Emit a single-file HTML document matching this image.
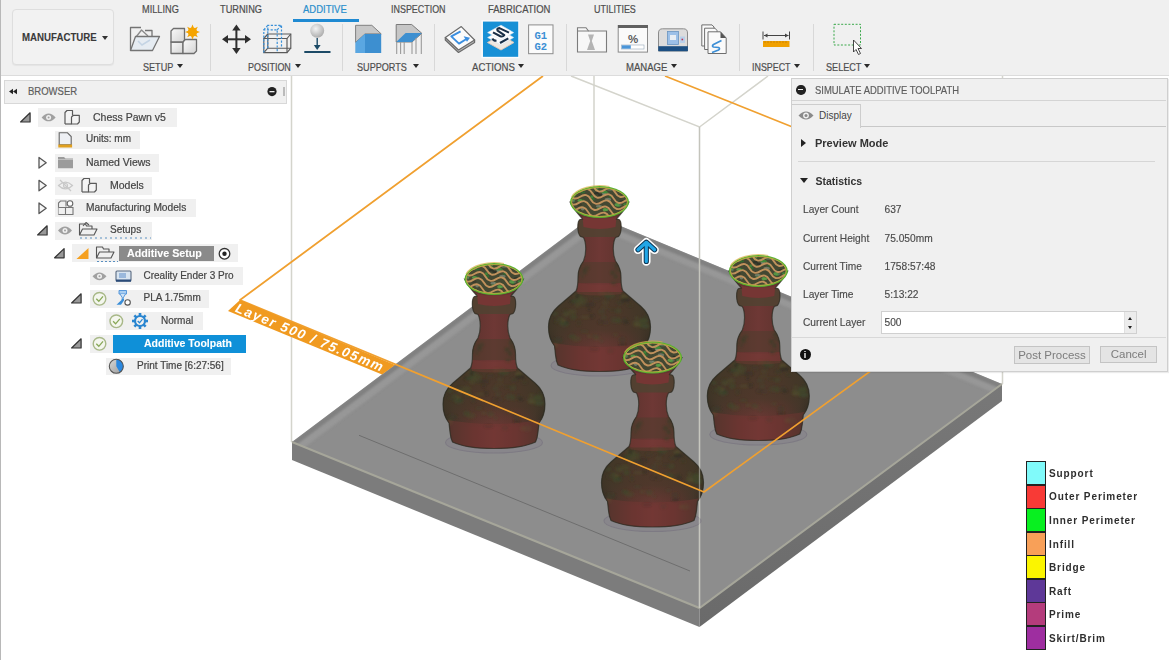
<!DOCTYPE html>
<html><head><meta charset="utf-8">
<style>
*{box-sizing:border-box;margin:0;padding:0}
html,body{width:1169px;height:660px;overflow:hidden;background:#fff;font-family:"Liberation Sans",sans-serif;position:relative}
.a{position:absolute;white-space:nowrap}
#tb{position:absolute;left:0;top:0;width:1169px;height:76px;background:#f0f0f0;border-bottom:1px solid #dcdcdc}
.tab{position:absolute;top:3.5px;font-size:10.4px;color:#4e4e4e;line-height:12px;-webkit-text-stroke:0.2px #4e4e4e;transform-origin:0 0}
.grp{position:absolute;top:61.5px;font-size:10.4px;color:#4e4e4e;line-height:12px;-webkit-text-stroke:0.2px #4e4e4e;transform-origin:0 0}
.grp i{display:inline-block;width:0;height:0;border-left:3px solid transparent;border-right:3px solid transparent;border-top:4px solid #333;margin-left:3.5px;vertical-align:2px}
.sep{position:absolute;top:24px;width:1px;height:47px;background:#d8d8d8}
.row{position:absolute;height:18px;background:#f0f0f0}
.rt{position:absolute;font-size:10.5px;color:#444;line-height:12px;-webkit-text-stroke:0.2px #444}
.lbl{position:absolute;font-size:10.2px;color:#4a4a4a;line-height:12px;-webkit-text-stroke:0.15px #4a4a4a}
.leg{position:absolute;left:1049px;font-size:10px;font-weight:bold;letter-spacing:0.9px;color:#2e2e2e;line-height:12px}
</style></head><body>
<div style="position:absolute;left:0;top:0;width:1px;height:660px;background:#b8b8b8;z-index:50"></div>

<!-- SCENE -->
<svg class="a" style="left:0;top:0" width="1169" height="660" viewBox="0 0 1169 660">
 <defs>
  <linearGradient id="pshade" x1="0" y1="0" x2="1" y2="0">
   <stop offset="0" stop-color="#2c2a20"/><stop offset="0.1" stop-color="#44342a"/><stop offset="0.3" stop-color="#60342f"/><stop offset="0.5" stop-color="#6e3835"/><stop offset="0.72" stop-color="#60342f"/><stop offset="0.9" stop-color="#44342a"/><stop offset="1" stop-color="#2a2820"/>
  </linearGradient>
  <linearGradient id="bulb" x1="0" y1="0" x2="1" y2="0">
   <stop offset="0" stop-color="#3a3424"/><stop offset="0.2" stop-color="#4e4030"/><stop offset="0.5" stop-color="#5a3e32"/><stop offset="0.8" stop-color="#4a3a2c"/><stop offset="1" stop-color="#2e2a20"/>
  </linearGradient>
  <linearGradient id="plateL" x1="0" y1="0" x2="0" y2="1"><stop offset="0" stop-color="#8a8a8a"/><stop offset="1" stop-color="#767676"/></linearGradient>
  <clipPath id="ellclip"><ellipse cx="0" cy="0" rx="27.6" ry="14.2"/></clipPath>
  <filter id="blur05" x="-10%" y="-10%" width="120%" height="120%"><feGaussianBlur stdDeviation="0.5"/></filter>
  <filter id="blur1" x="-10%" y="-10%" width="120%" height="120%"><feGaussianBlur stdDeviation="1.1"/></filter>
  <clipPath id="silclip"><path d="M 29.5 0 C 26 8 19 14 17 17 L 19.5 17.5 C 22.5 19 22.5 31 19 34.5 L 16 35.5 C 13 41 13 52 16 59 C 19 63 21.5 68 21.5 75 C 21.5 82 22 86 23.5 89 C 28 93 34 98 41 104 C 47 109 51 116 51 125 C 51 133 49 139 45 144 L 44 153 C 43.5 158 42.5 161 41.5 163 C30 168.5 15 169.5 0 169.5 C-15 169.5 -30 168.5 -41.5 163 C -42.5 161 -43.5 158 -44 153 L -45 144 C -49 139 -51 133 -51 125 C -51 116 -47 109 -41 104 C -34 98 -28 93 -23.5 89 C -22 86 -21.5 82 -21.5 75 C -21.5 68 -19 63 -16 59 C -13 52 -13 41 -16 35.5 L -19 34.5 C -22.5 31 -22.5 19 -19.5 17.5 L -17 17 C -19 14 -26 8 -29.5 0 Z"/></clipPath>
  <linearGradient id="olive" x1="0" y1="0" x2="0" y2="1"><stop offset="0" stop-color="#403826" stop-opacity="0.9"/><stop offset="0.65" stop-color="#443828" stop-opacity="0.8"/><stop offset="1" stop-color="#4a3a2c" stop-opacity="0.1"/></linearGradient>
  <radialGradient id="bulbhi" cx="0.5" cy="0.5" r="0.5"><stop offset="0" stop-color="#7a3a36" stop-opacity="0.55"/><stop offset="1" stop-color="#7a3a36" stop-opacity="0"/></radialGradient>
  <g id="pawn">
   <ellipse cx="0" cy="163.5" rx="48.5" ry="10.5" fill="#86828a" stroke="#726c7c" stroke-width="1.1" opacity="0.55"/>
   <path d="M 29.5 0 C 26 8 19 14 17 17 L 19.5 17.5 C 22.5 19 22.5 31 19 34.5 L 16 35.5 C 13 41 13 52 16 59 C 19 63 21.5 68 21.5 75 C 21.5 82 22 86 23.5 89 C 28 93 34 98 41 104 C 47 109 51 116 51 125 C 51 133 49 139 45 144 L 44 153 C 43.5 158 42.5 161 41.5 163 C30 168.5 15 169.5 0 169.5 C-15 169.5 -30 168.5 -41.5 163 C -42.5 161 -43.5 158 -44 153 L -45 144 C -49 139 -51 133 -51 125 C -51 116 -47 109 -41 104 C -34 98 -28 93 -23.5 89 C -22 86 -21.5 82 -21.5 75 C -21.5 68 -19 63 -16 59 C -13 52 -13 41 -16 35.5 L -19 34.5 C -22.5 31 -22.5 19 -19.5 17.5 L -17 17 C -19 14 -26 8 -29.5 0 Z" fill="url(#pshade)"/>
   <g clip-path="url(#silclip)">
    <rect x="-52" y="90" width="104" height="58" fill="url(#olive)" opacity="0.9"/>
    <g filter="url(#blur1)"><ellipse cx="-34.3" cy="109.4" rx="2.2" ry="2.2" fill="#3c3a28" opacity="0.60"/><ellipse cx="-44.2" cy="111.9" rx="2.6" ry="1.4" fill="#3e4a2c" opacity="0.69"/><ellipse cx="-25.9" cy="115.1" rx="3.3" ry="2.7" fill="#3e4a2c" opacity="0.51"/><ellipse cx="-17.2" cy="97.4" rx="4.8" ry="2.2" fill="#3e4a2c" opacity="0.53"/><ellipse cx="47.6" cy="113.8" rx="3.7" ry="1.4" fill="#3c3a28" opacity="0.73"/><ellipse cx="4.1" cy="115.1" rx="2.9" ry="2.7" fill="#3e4a2c" opacity="0.29"/><ellipse cx="5.9" cy="100.8" rx="3.1" ry="2.2" fill="#4a4a2c" opacity="0.33"/><ellipse cx="-22.6" cy="93.8" rx="3.5" ry="2.2" fill="#4a4a2c" opacity="0.69"/><ellipse cx="-3.4" cy="136.6" rx="3.1" ry="1.6" fill="#56502e" opacity="0.28"/><ellipse cx="20.2" cy="100.8" rx="3.7" ry="2.1" fill="#3c3a28" opacity="0.53"/><ellipse cx="22.9" cy="142.5" rx="3.8" ry="1.3" fill="#2e2c22" opacity="0.48"/><ellipse cx="-33.5" cy="120.7" rx="2.5" ry="2.1" fill="#2e2c22" opacity="0.59"/><ellipse cx="7.9" cy="92.4" rx="3.7" ry="2.8" fill="#3e4a2c" opacity="0.42"/><ellipse cx="18.8" cy="108.8" rx="3.5" ry="2.6" fill="#3e4a2c" opacity="0.45"/><ellipse cx="-21.3" cy="94.1" rx="3.4" ry="2.4" fill="#2e2c22" opacity="0.66"/><ellipse cx="10.3" cy="93.6" rx="5.0" ry="2.7" fill="#3e4a2c" opacity="0.45"/><ellipse cx="-10.4" cy="107.1" rx="2.1" ry="2.0" fill="#2e2c22" opacity="0.36"/><ellipse cx="-26.9" cy="100.1" rx="2.7" ry="1.7" fill="#3c3a28" opacity="0.63"/><ellipse cx="-10.2" cy="134.3" rx="2.2" ry="2.0" fill="#56502e" opacity="0.35"/><ellipse cx="38.3" cy="123.0" rx="4.6" ry="1.7" fill="#56502e" opacity="0.63"/><ellipse cx="-14.1" cy="114.9" rx="4.9" ry="1.5" fill="#56502e" opacity="0.39"/><ellipse cx="-19.2" cy="100.6" rx="2.0" ry="2.7" fill="#4a4a2c" opacity="0.52"/><ellipse cx="-15.9" cy="100.9" rx="3.3" ry="1.9" fill="#4a4a2c" opacity="0.47"/><ellipse cx="45.3" cy="124.0" rx="4.9" ry="2.4" fill="#3e4a2c" opacity="0.70"/><ellipse cx="-4.3" cy="134.4" rx="3.2" ry="1.9" fill="#3e4a2c" opacity="0.29"/><ellipse cx="7.9" cy="96.2" rx="2.6" ry="3.0" fill="#3c3a28" opacity="0.38"/><ellipse cx="-39.0" cy="116.4" rx="2.2" ry="1.2" fill="#3e4a2c" opacity="0.64"/><ellipse cx="-26.8" cy="99.1" rx="3.8" ry="1.3" fill="#2e2c22" opacity="0.65"/><ellipse cx="-9.6" cy="102.5" rx="4.9" ry="2.3" fill="#2e2c22" opacity="0.37"/><ellipse cx="-38.5" cy="118.4" rx="5.0" ry="2.0" fill="#56502e" opacity="0.63"/><ellipse cx="-41.4" cy="119.0" rx="4.2" ry="2.5" fill="#3c3a28" opacity="0.66"/><ellipse cx="19.2" cy="118.7" rx="2.1" ry="2.9" fill="#3e4a2c" opacity="0.44"/><ellipse cx="-35.3" cy="121.7" rx="4.7" ry="2.6" fill="#3e4a2c" opacity="0.60"/><ellipse cx="13.4" cy="107.9" rx="4.1" ry="1.7" fill="#3c3a28" opacity="0.39"/><ellipse cx="-33.3" cy="112.0" rx="3.6" ry="2.6" fill="#4a4a2c" opacity="0.58"/><ellipse cx="-27.5" cy="109.8" rx="4.4" ry="2.7" fill="#4a4a2c" opacity="0.53"/><ellipse cx="-27.3" cy="134.4" rx="3.5" ry="2.5" fill="#3e4a2c" opacity="0.52"/><ellipse cx="29.0" cy="149.4" rx="2.8" ry="2.4" fill="#56502e" opacity="0.54"/><ellipse cx="-5.3" cy="147.4" rx="4.9" ry="1.9" fill="#2e2c22" opacity="0.30"/><ellipse cx="-21.8" cy="103.2" rx="3.0" ry="2.1" fill="#4a4a2c" opacity="0.52"/><ellipse cx="11.0" cy="149.1" rx="3.4" ry="2.4" fill="#3c3a28" opacity="0.36"/><ellipse cx="-41.5" cy="138.0" rx="4.7" ry="2.6" fill="#3c3a28" opacity="0.67"/><ellipse cx="-2.2" cy="135.0" rx="3.3" ry="2.3" fill="#4a4a2c" opacity="0.27"/><ellipse cx="24.8" cy="95.2" rx="3.4" ry="2.5" fill="#56502e" opacity="0.70"/><ellipse cx="-18.9" cy="95.1" rx="2.1" ry="2.3" fill="#4a4a2c" opacity="0.59"/><ellipse cx="15.6" cy="117.9" rx="4.5" ry="3.0" fill="#3e4a2c" opacity="0.41"/><ellipse cx="-15.0" cy="129.4" rx="3.6" ry="1.2" fill="#3e4a2c" opacity="0.40"/><ellipse cx="22.6" cy="138.0" rx="3.6" ry="2.9" fill="#3c3a28" opacity="0.48"/><ellipse cx="37.2" cy="116.0" rx="2.1" ry="1.6" fill="#4a4a2c" opacity="0.62"/><ellipse cx="26.4" cy="120.1" rx="2.8" ry="2.0" fill="#2e2c22" opacity="0.51"/><ellipse cx="26.1" cy="97.9" rx="4.7" ry="2.4" fill="#2e2c22" opacity="0.66"/><ellipse cx="1.7" cy="138.9" rx="2.4" ry="1.5" fill="#3e4a2c" opacity="0.27"/><ellipse cx="37.3" cy="120.6" rx="3.8" ry="2.6" fill="#4a4a2c" opacity="0.62"/><ellipse cx="-24.0" cy="99.0" rx="4.2" ry="2.2" fill="#3e4a2c" opacity="0.61"/><ellipse cx="1.8" cy="109.6" rx="3.4" ry="2.6" fill="#3e4a2c" opacity="0.27"/><ellipse cx="-44.3" cy="143.0" rx="2.8" ry="2.6" fill="#4a4a2c" opacity="0.69"/><ellipse cx="6.2" cy="120.5" rx="3.3" ry="2.3" fill="#3c3a28" opacity="0.31"/><ellipse cx="1.2" cy="120.3" rx="3.4" ry="2.2" fill="#2e2c22" opacity="0.26"/><ellipse cx="44.2" cy="118.7" rx="4.6" ry="2.9" fill="#3e4a2c" opacity="0.69"/><ellipse cx="5.2" cy="105.6" rx="4.5" ry="1.4" fill="#4a4a2c" opacity="0.31"/><ellipse cx="-3.6" cy="97.3" rx="4.0" ry="2.0" fill="#3c3a28" opacity="0.31"/><ellipse cx="-15.4" cy="102.8" rx="4.7" ry="1.5" fill="#3c3a28" opacity="0.45"/><ellipse cx="16.0" cy="133.0" rx="2.8" ry="1.4" fill="#4a4a2c" opacity="0.41"/><ellipse cx="24.7" cy="118.1" rx="3.2" ry="2.1" fill="#3c3a28" opacity="0.50"/><ellipse cx="33.2" cy="149.4" rx="4.1" ry="3.0" fill="#4a4a2c" opacity="0.58"/><ellipse cx="-7.9" cy="114.2" rx="3.0" ry="2.5" fill="#2e2c22" opacity="0.33"/><ellipse cx="2.4" cy="91.2" rx="4.1" ry="1.9" fill="#56502e" opacity="0.30"/><ellipse cx="-20.5" cy="121.0" rx="2.3" ry="2.9" fill="#3c3a28" opacity="0.45"/><ellipse cx="30.5" cy="103.7" rx="2.8" ry="1.3" fill="#3c3a28" opacity="0.63"/><ellipse cx="-23.0" cy="136.7" rx="4.5" ry="2.7" fill="#4a4a2c" opacity="0.48"/><ellipse cx="16.1" cy="74.9" rx="2.3" ry="2.3" fill="#3a3a28" opacity="0.6"/><ellipse cx="12.9" cy="70.9" rx="1.6" ry="2.5" fill="#3a3a28" opacity="0.6"/><ellipse cx="-14.7" cy="69.4" rx="1.5" ry="1.6" fill="#3a3a28" opacity="0.6"/><ellipse cx="-12.7" cy="65.7" rx="2.8" ry="2.2" fill="#3a3a28" opacity="0.6"/><ellipse cx="21.3" cy="67.5" rx="1.9" ry="1.7" fill="#3a3a28" opacity="0.6"/><ellipse cx="-21.4" cy="71.6" rx="3.0" ry="1.9" fill="#3a3a28" opacity="0.6"/><ellipse cx="18.3" cy="64.0" rx="2.3" ry="1.8" fill="#3a3a28" opacity="0.6"/><ellipse cx="-14.7" cy="69.8" rx="2.7" ry="3.0" fill="#3a3a28" opacity="0.6"/><ellipse cx="-19.3" cy="60.8" rx="2.3" ry="1.8" fill="#3a3a28" opacity="0.6"/><ellipse cx="13.1" cy="70.4" rx="2.7" ry="2.1" fill="#3a3a28" opacity="0.6"/><ellipse cx="21.7" cy="70.9" rx="2.0" ry="1.8" fill="#3a3a28" opacity="0.6"/><ellipse cx="-20.3" cy="65.1" rx="2.6" ry="2.5" fill="#3a3a28" opacity="0.6"/><ellipse cx="21.8" cy="68.9" rx="2.8" ry="1.5" fill="#3a3a28" opacity="0.6"/><ellipse cx="16.3" cy="73.8" rx="1.6" ry="2.5" fill="#3a3a28" opacity="0.6"/><ellipse cx="18.0" cy="68.4" rx="2.5" ry="1.6" fill="#3a3a28" opacity="0.6"/><ellipse cx="16.5" cy="64.1" rx="1.9" ry="2.9" fill="#3a3a28" opacity="0.6"/><ellipse cx="14.4" cy="81.4" rx="2.9" ry="2.0" fill="#3a3a28" opacity="0.6"/><ellipse cx="-15.4" cy="67.8" rx="1.6" ry="1.9" fill="#3a3a28" opacity="0.6"/><ellipse cx="-17.0" cy="74.4" rx="1.5" ry="1.9" fill="#3a3a28" opacity="0.6"/><ellipse cx="17.9" cy="62.0" rx="2.1" ry="1.9" fill="#3a3a28" opacity="0.6"/>
    </g>
    <rect x="-52" y="60" width="104" height="21" fill="#4a3e2c" opacity="0.45"/>
    <rect x="-52" y="17" width="104" height="18" fill="#4e4432" opacity="0.75"/>
    <path d="M-17 15 Q0 19 17 15 L16 25 Q0 29 -16 25 Z" fill="#763634"/>
    <path d="M-22 81 Q0 84 22 81 L22 92 Q0 95 -22 92 Z" fill="#863a38" opacity="0.3"/>
    <path d="M-52 140 Q0 150 52 140 V175 H-52 Z" fill="#7a3634" opacity="0.4"/>
    <path d="M-8 100 H8 V170 H-8 Z" fill="#7c3a38" opacity="0.0"/>
   </g>
   <path d="M 29.5 0 C 26 8 19 14 17 17 L 19.5 17.5 C 22.5 19 22.5 31 19 34.5 L 16 35.5 C 13 41 13 52 16 59 C 19 63 21.5 68 21.5 75 C 21.5 82 22 86 23.5 89 C 28 93 34 98 41 104 C 47 109 51 116 51 125 C 51 133 49 139 45 144 L 44 153 C 43.5 158 42.5 161 41.5 163 C30 168.5 15 169.5 0 169.5 C-15 169.5 -30 168.5 -41.5 163 C -42.5 161 -43.5 158 -44 153 L -45 144 C -49 139 -51 133 -51 125 C -51 116 -47 109 -41 104 C -34 98 -28 93 -23.5 89 C -22 86 -21.5 82 -21.5 75 C -21.5 68 -19 63 -16 59 C -13 52 -13 41 -16 35.5 L -19 34.5 C -22.5 31 -22.5 19 -19.5 17.5 L -17 17 C -19 14 -26 8 -29.5 0 Z" fill="none" stroke="#2a2a20" stroke-width="1.2" opacity="0.7"/>
   <ellipse cx="0" cy="0" rx="29.5" ry="16" fill="#58b030"/>
   <ellipse cx="0" cy="0" rx="27.6" ry="14.2" fill="#434832"/>
   <g clip-path="url(#ellclip)">
    <g filter="url(#blur05)"><ellipse cx="-2.6" cy="1.7" rx="2.3" ry="1.4" fill="#3a3a2a" opacity="0.85"/><ellipse cx="4.7" cy="-8.8" rx="2.3" ry="1.5" fill="#8a9a88" opacity="0.6"/><ellipse cx="-16.9" cy="-1.5" rx="1.7" ry="1.6" fill="#2f6e30" opacity="0.85"/><ellipse cx="10.4" cy="-12.8" rx="3.1" ry="1.5" fill="#6a8a68" opacity="0.6"/><ellipse cx="6.2" cy="-9.6" rx="2.9" ry="1.0" fill="#3f8a38" opacity="0.85"/><ellipse cx="5.4" cy="7.8" rx="2.2" ry="1.7" fill="#5aa048" opacity="0.85"/><ellipse cx="1.0" cy="3.9" rx="1.5" ry="1.0" fill="#6a8a68" opacity="0.6"/><ellipse cx="8.4" cy="-2.6" rx="3.2" ry="1.7" fill="#8a9a88" opacity="0.6"/><ellipse cx="11.2" cy="-5.2" rx="2.4" ry="0.9" fill="#2f6e30" opacity="0.85"/><ellipse cx="3.4" cy="-11.0" rx="2.9" ry="1.2" fill="#3f8a38" opacity="0.85"/><ellipse cx="22.2" cy="-0.8" rx="2.2" ry="1.0" fill="#2a2e24" opacity="0.85"/><ellipse cx="7.0" cy="7.8" rx="2.1" ry="1.2" fill="#5aa048" opacity="0.85"/><ellipse cx="-26.2" cy="-2.5" rx="1.7" ry="1.5" fill="#3f8a38" opacity="0.85"/><ellipse cx="-26.4" cy="-1.0" rx="1.8" ry="1.4" fill="#6a8a68" opacity="0.6"/><ellipse cx="-2.8" cy="-8.7" rx="2.8" ry="1.3" fill="#2a2e24" opacity="0.85"/><ellipse cx="-6.3" cy="-2.9" rx="1.5" ry="1.7" fill="#2f6e30" opacity="0.85"/><ellipse cx="25.6" cy="2.6" rx="1.9" ry="1.3" fill="#3f8a38" opacity="0.85"/><ellipse cx="19.1" cy="4.0" rx="1.6" ry="1.0" fill="#3f8a38" opacity="0.85"/><ellipse cx="-3.2" cy="-13.7" rx="2.1" ry="1.2" fill="#8a9a88" opacity="0.6"/><ellipse cx="4.5" cy="-7.2" rx="2.1" ry="1.5" fill="#8a9a88" opacity="0.6"/><ellipse cx="-20.1" cy="2.4" rx="2.5" ry="1.7" fill="#3a3a2a" opacity="0.85"/><ellipse cx="-17.1" cy="-9.7" rx="2.9" ry="1.1" fill="#2f6e30" opacity="0.85"/><ellipse cx="-16.8" cy="6.7" rx="1.8" ry="1.8" fill="#8a9a88" opacity="0.6"/><ellipse cx="20.6" cy="2.9" rx="1.6" ry="1.0" fill="#6a8a68" opacity="0.6"/><ellipse cx="0.7" cy="-6.9" rx="2.7" ry="1.1" fill="#2a2e24" opacity="0.85"/><ellipse cx="17.5" cy="2.7" rx="2.4" ry="1.7" fill="#5aa048" opacity="0.85"/><ellipse cx="-1.1" cy="4.3" rx="2.5" ry="1.2" fill="#8a9a88" opacity="0.6"/><ellipse cx="-2.9" cy="-12.3" rx="2.0" ry="1.4" fill="#2f6e30" opacity="0.85"/><ellipse cx="-19.5" cy="-1.4" rx="2.6" ry="1.5" fill="#5aa048" opacity="0.85"/><ellipse cx="4.6" cy="-10.1" rx="3.1" ry="1.3" fill="#3f8a38" opacity="0.85"/><ellipse cx="-7.7" cy="-5.3" rx="1.5" ry="1.5" fill="#3f8a38" opacity="0.85"/><ellipse cx="-1.0" cy="6.5" rx="1.7" ry="1.0" fill="#5aa048" opacity="0.85"/></g>
    <g fill="none" stroke="#c0915c" stroke-width="1.9" transform="rotate(14)"><path d="M-42 -19.3 q5.5 -6 11 0 t11 0 t11 0 t11 0 t11 0 t11 0 t11 0 t11 0"/><path d="M-42 -13.0 q5.5 -6 11 0 t11 0 t11 0 t11 0 t11 0 t11 0 t11 0 t11 0"/><path d="M-42 -6.7 q5.5 -6 11 0 t11 0 t11 0 t11 0 t11 0 t11 0 t11 0 t11 0"/><path d="M-42 -0.4 q5.5 -6 11 0 t11 0 t11 0 t11 0 t11 0 t11 0 t11 0 t11 0"/><path d="M-42 5.9 q5.5 -6 11 0 t11 0 t11 0 t11 0 t11 0 t11 0 t11 0 t11 0"/><path d="M-42 12.2 q5.5 -6 11 0 t11 0 t11 0 t11 0 t11 0 t11 0 t11 0 t11 0"/><path d="M-42 18.5 q5.5 -6 11 0 t11 0 t11 0 t11 0 t11 0 t11 0 t11 0 t11 0"/></g>
   </g>
   <ellipse cx="0" cy="0" rx="27.8" ry="14.4" fill="none" stroke="#d8b048" stroke-width="0.9" opacity="0.8"/>
   <path d="M-28 -5 A29.5 16 0 0 1 10 -15.5" fill="none" stroke="#d8b048" stroke-width="1.1" opacity="0.7"/>
  </g>
 </defs>
 <!-- build volume back lines (behind plate) -->
 <g stroke="#d4d4cc" stroke-width="1.5" fill="none">
  <path d="M291.5 76 V442 M594 76 V218 M1002.5 76 V384"/>
  <path d="M571 76 L699.5 127 L768 76"/>
 </g>
 <!-- plate -->
 <filter id="blur07" x="-5%" y="-5%" width="110%" height="110%"><feGaussianBlur stdDeviation="1.1"/></filter>
 <clipPath id="plateclip"><path d="M594 215 L292 442 L699.5 608 L1002 384 Z"/></clipPath>
 <path d="M292 442 L699.5 608 L699.5 627 L292 460 Z" fill="#7c7c7c"/>
 <defs><linearGradient id="sideR" x1="0" y1="0" x2="0" y2="1"><stop offset="0" stop-color="#787878"/><stop offset="1" stop-color="#6a6a6a"/></linearGradient><linearGradient id="sideL" x1="0" y1="0" x2="0" y2="1"><stop offset="0" stop-color="#848484"/><stop offset="1" stop-color="#767676"/></linearGradient></defs>
 <path d="M699.5 608 L1002 384 L1002 401 L699.5 627 Z" fill="url(#sideR)"/>
 <path d="M594 215 L292 442 L699.5 608 L1002 384 Z" fill="#8d8d8d"/>
 <g clip-path="url(#plateclip)"><g filter="url(#blur07)">
  <path d="M594 215 L292 442 L295 446 L597 219 Z" fill="#808080"/>
  <path d="M597 219 L295 446 L299 451.5 L601 224.5 Z" fill="#999999" opacity="0.85"/>
  <path d="M594 215 L1002 384 L1000.2 388.6 L592.2 219.6 Z" fill="#808080"/>
  <path d="M592.2 219.6 L1000.2 388.6 L997.8 394.5 L589.8 225.5 Z" fill="#999999" opacity="0.85"/>
 </g></g>
 <path d="M292 442 L699.5 608 L1002 384" fill="none" stroke="#a6a69a" stroke-width="2"/>
 <path d="M359 435.3 L690 571" stroke="#505050" stroke-width="1" opacity="0.5"/>
 <path d="M699.5 127 V608" stroke="#c4c4bc" stroke-width="1.5"/>
 <!-- pawns -->
 <use href="#pawn" x="599.5" y="202"/>
 <use href="#pawn" x="494" y="279"/>
 <use href="#pawn" x="758.3" y="271"/>
 <use href="#pawn" x="652.5" y="357.5"/>
 <path d="M699.5 400 V608" stroke="#c8c8c0" stroke-width="1.3" opacity="0.55"/>
 <!-- orange layer -->
 <g stroke="#f0a030" stroke-width="1.7" fill="none" stroke-linejoin="round">
  <path d="M543 76 L240 300 L704 492 L1060 233.5"/>
  <path d="M665 76 L800 130"/>
 </g>
 <path d="M240 300 L395 365 L382 374.5 L228 311 Z" fill="#f09a20"/>
 <text transform="translate(234.5 311.5) rotate(22.3)" font-family="Liberation Sans" font-weight="bold" font-style="italic" font-size="13.4" fill="#fff" letter-spacing="1.55">Layer 500 / 75.05mm</text>
 <!-- blue arrow -->
 <g fill="none" stroke-linecap="round" stroke-linejoin="round">
  <path d="M638 249.8 L646.3 242.3 L654.6 249.8 M646.3 243 V261.5" stroke="#fff" stroke-width="8.5"/>
  <path d="M638 249.8 L646.3 242.3 L654.6 249.8 M646.3 243 V261.5" stroke="#0c3452" stroke-width="5.2"/>
  <path d="M638 249.8 L646.3 242.3 L654.6 249.8 M646.3 243 V261.5" stroke="#22a6e6" stroke-width="3.2"/>
 </g>
</svg>

<!-- TOOLBAR -->
<div id="tb">
  <div class="a" style="left:12px;top:9px;width:102px;height:56px;border:1px solid #dedede;border-radius:4px;background:#f2f2f2;box-shadow:0 1px 1px #e4e4e4"></div>
  <div class="a" style="left:22px;top:31px;font-size:11px;font-weight:bold;color:#3a3a3a;line-height:12px;-webkit-text-stroke:0.1px #3a3a3a;transform:scaleX(0.88);transform-origin:0 0">MANUFACTURE</div>
  <div class="a" style="left:101.5px;top:35.5px;border-left:3px solid transparent;border-right:3px solid transparent;border-top:4px solid #333"></div>

  <div class="tab" style="left:141.8px;transform:scaleX(0.885)">MILLING</div>
  <div class="tab" style="left:219.8px;transform:scaleX(0.887)">TURNING</div>
  <div class="tab" style="left:303.0px;color:#2a8fcc;-webkit-text-stroke-color:#2a8fcc;transform:scaleX(0.912)">ADDITIVE</div>
  <div class="tab" style="left:391.2px;transform:scaleX(0.859)">INSPECTION</div>
  <div class="tab" style="left:488.2px;transform:scaleX(0.911)">FABRICATION</div>
  <div class="tab" style="left:594.2px;transform:scaleX(0.863)">UTILITIES</div>
  <div class="grp" style="left:142.8px;transform:scaleX(0.874)">SETUP</div>
  <div class="a" style="left:176.5px;top:64.2px;border-left:3px solid transparent;border-right:3px solid transparent;border-top:4.2px solid #2a2a2a"></div>
  <div class="grp" style="left:247.5px;transform:scaleX(0.863)">POSITION</div>
  <div class="a" style="left:294.5px;top:64.2px;border-left:3px solid transparent;border-right:3px solid transparent;border-top:4.2px solid #2a2a2a"></div>
  <div class="grp" style="left:357.2px;transform:scaleX(0.875)">SUPPORTS</div>
  <div class="a" style="left:412.5px;top:64.2px;border-left:3px solid transparent;border-right:3px solid transparent;border-top:4.2px solid #2a2a2a"></div>
  <div class="grp" style="left:472.2px;transform:scaleX(0.929)">ACTIONS</div>
  <div class="a" style="left:517.5px;top:64.2px;border-left:3px solid transparent;border-right:3px solid transparent;border-top:4.2px solid #2a2a2a"></div>
  <div class="grp" style="left:625.8px;transform:scaleX(0.919)">MANAGE</div>
  <div class="a" style="left:671px;top:64.2px;border-left:3px solid transparent;border-right:3px solid transparent;border-top:4.2px solid #2a2a2a"></div>
  <div class="grp" style="left:751.5px;transform:scaleX(0.856)">INSPECT</div>
  <div class="a" style="left:793.8px;top:64.2px;border-left:3px solid transparent;border-right:3px solid transparent;border-top:4.2px solid #2a2a2a"></div>
  <div class="grp" style="left:825.7px;transform:scaleX(0.875)">SELECT</div>
  <div class="a" style="left:863.5px;top:64.2px;border-left:3px solid transparent;border-right:3px solid transparent;border-top:4.2px solid #2a2a2a"></div>
  <div class="a" style="left:292.5px;top:18.5px;width:66px;height:3px;background:#1f8ad2"></div>


  <div class="sep" style="left:210px"></div>
  <div class="sep" style="left:342px"></div>
  <div class="sep" style="left:434px"></div>
  <div class="sep" style="left:566px"></div>
  <div class="sep" style="left:739px"></div>
  <div class="sep" style="left:813px"></div>

<svg class="a" style="left:0;top:0" width="1169" height="76" viewBox="0 0 1169 76">
 <defs>
  <linearGradient id="gcube" x1="0" y1="0" x2="1" y2="1"><stop offset="0" stop-color="#fafafa"/><stop offset="1" stop-color="#d4d4d4"/></linearGradient>
  <radialGradient id="gball" cx="0.4" cy="0.35" r="0.7"><stop offset="0" stop-color="#f4f4f4"/><stop offset="1" stop-color="#a8a8a8"/></radialGradient>
 </defs>
 <!-- folder open -->
 <g fill="none" stroke="#747474" stroke-width="1.3" stroke-linejoin="round">
  <path d="M130.5 50.5 V27.5 H141"/>
  <path d="M136 37 L141.5 30 L148 36" stroke="#8a8a8a"/>
  <path d="M145 30.5 H152 V36.5"/>
  <path d="M130.5 50.5 L135.5 36.5 H159.5 L152.5 50.5 Z" fill="#e6ecf2"/>
 </g>
 <path d="M138 41 L142 45 L150 40" stroke="#c4d4e4" stroke-width="1.5" fill="none"/>
 <!-- setup cubes -->
 <g stroke="#6e6e6e" stroke-width="1.3" fill="url(#gcube)" stroke-linejoin="round">
  <path d="M171 53.5 V42 H183 V53.5 Z"/>
  <path d="M183 53.5 V41.5 L185.5 39.5 H196.5 V51 L194 53.5 Z"/>
  <path d="M171 42 V31 L173.5 28.5 H184.5 V40 L183 42 Z"/>
 </g>
 <g transform="translate(192.5 32)" fill="#f5a400">
  <circle r="4.6"/>
  <path d="M0 -7.5 L1.6 -3.5 L5.3 -5.3 L3.5 -1.6 L7.5 0 L3.5 1.6 L5.3 5.3 L1.6 3.5 L0 7.5 L-1.6 3.5 L-5.3 5.3 L-3.5 1.6 L-7.5 0 L-3.5 -1.6 L-5.3 -5.3 L-1.6 -3.5 Z"/>
 </g>
 <!-- move -->
 <g fill="#2e2e2e">
  <rect x="235.4" y="29" width="2" height="21"/>
  <rect x="226" y="38.3" width="21" height="2"/>
  <path d="M236.4 24.5 L240.6 30.5 H232.2 Z"/>
  <path d="M236.4 54 L240.6 48 H232.2 Z"/>
  <path d="M222 39.3 L228 35.1 V43.5 Z"/>
  <path d="M251 39.3 L245 35.1 V43.5 Z"/>
 </g>
 <!-- box -->
 <g fill="none" stroke="#5a5a5a" stroke-width="1.15">
  <path d="M263.8 38.5 H287 V52.6 H263.8 Z"/>
  <path d="M267.8 34 H290.8 V48.2 H267.8 Z"/>
  <path d="M263.8 38.5 L267.8 34 M287 38.5 L290.8 34 M287 52.6 L290.8 48.2 M263.8 52.6 L267.8 48.2"/>
 </g>
 <g fill="none" stroke="#3a90d8" stroke-width="1.2" stroke-dasharray="2.2 1.5">
  <path d="M263.8 52.6 V29.8 H277.2 V52.6"/>
  <path d="M267.8 48.2 V25.3 H281.5 V48.2"/>
  <path d="M263.8 29.8 L267.8 25.3 M277.2 29.8 L281.5 25.3"/>
 </g>
 <!-- pin -->
 <circle cx="317.2" cy="30.8" r="7" fill="url(#gball)"/>
 <g fill="#1c4a66">
  <rect x="316.5" y="38" width="1.4" height="9"/>
  <path d="M313.8 45 H320.6 L317.2 50 Z"/>
  <rect x="304.3" y="51" width="26.2" height="2"/>
 </g>
 <!-- supports cube -->
 <path d="M355.6 25.3 H371.8 L381.2 33.9 H365 L355.6 42.4 Z" fill="#c8c8c8" stroke="#808080" stroke-width="1"/>
 <path d="M355.6 42.4 L365 33.9 H381.2 V53 H355.6 Z" fill="#3d8fd0"/>
 <path d="M355.6 42.4 L365 33.9 V53 H355.6 Z" fill="#5aa7e2"/>
 <!-- supports lines -->
 <path d="M396.2 24.5 H411.7 L421.8 33.3 L412 42 H396.2 Z" fill="#c6c6c6" stroke="#7a7a7a" stroke-width="1"/>
 <path d="M396.2 42 L405.6 33 H421.8 L412 42 Z" fill="#3d8fd0"/>
 <g stroke="#9a9a9a" stroke-width="1.1">
  <path d="M396.7 42 V54 M400.6 42 V54 M404.2 42 V54 M412 42 V54 M416 38 V54 M421.3 34 V54"/>
 </g>
 <!-- actions diamond -->
 <path d="M445.3 37.5 L445.3 40 L458.5 52.5 L474.6 42.5 L474.6 40 Z" fill="#b8b8b8" stroke="#6a6a6a" stroke-width="1.2" stroke-linejoin="round"/>
 <path d="M445.3 37.5 L461.3 26.6 L474.6 40 L458.5 50 Z" fill="#fbfbfb" stroke="#6a6a6a" stroke-width="1.2" stroke-linejoin="round"/>
 <path d="M460.6 31.3 L451.3 36.4 L459 43.6 L466 39.2" fill="none" stroke="#3a8ee0" stroke-width="1.9" stroke-linejoin="round"/>
 <path d="M470 37.8 L463.6 36.2 L467 41.8 Z" fill="#3a8ee0"/>
 <!-- selected stack -->
 <rect x="482" y="20.8" width="36.8" height="36.8" fill="none" stroke="#fafcff" stroke-width="1.2"/>
 <rect x="483" y="21.6" width="35.2" height="35.2" fill="#1790d6"/>
 <path d="M487.5 42.5 L501 35 L514 42.5 L501 50 Z" fill="#ede8e2" stroke="#e6c8b4" stroke-width="0.9"/>
 <path d="M487.6 37.5 L501 30 L513.7 37.5 L501 45 Z" fill="#fbfdff" stroke="#d8e4ee" stroke-width="0.6"/>
 <path d="M492.5 38.5 Q493 40.8 496.5 40.8 M500 43 L508.3 38.3" fill="none" stroke="#1a3048" stroke-width="2.1"/>
 <path d="M487.6 32.6 L501 25.2 L513.7 32.6 L501 39.8 Z" fill="#fff" stroke="#e0eaf2" stroke-width="0.6"/>
 <path d="M493 32.4 L500.3 36.2 Q502.8 37.2 504.3 35.2 L497.6 30.6 Q496.4 28.6 499.4 28.1 L509 32.6" fill="none" stroke="#1a3048" stroke-width="2.1" stroke-linejoin="round"/>
 <!-- G1G2 -->
 <rect x="528.6" y="24.9" width="24.4" height="28.8" fill="#fbfbfb" stroke="#8c8c8c" stroke-width="1"/>
 <text x="540.8" y="38.8" text-anchor="middle" font-family="Liberation Mono" font-weight="bold" font-size="10.5" fill="#3c8fd4">G1</text>
 <text x="540.8" y="49.6" text-anchor="middle" font-family="Liberation Mono" font-weight="bold" font-size="10.5" fill="#3c8fd4">G2</text>
 <!-- folder hourglass -->
 <path d="M577.5 52 V27.7 H586 L588.5 31 H606.5 V52 Z" fill="#f7f7f7" stroke="#7c7c7c" stroke-width="1.1"/>
 <path d="M577.5 31 H588.5" stroke="#7c7c7c" stroke-width="1"/>
 <path d="M588 34.5 H594 L591.8 41 L595 50 H587 L590.2 41 Z" fill="#b4b4b4"/>
 <!-- percent window -->
 <rect x="618.2" y="25.5" width="29.3" height="26.6" fill="#fafafa" stroke="#8a8a8a" stroke-width="1"/>
 <rect x="618" y="25" width="30" height="3" fill="#606060"/>
 <text x="633" y="42.5" text-anchor="middle" font-family="Liberation Sans" font-weight="bold" font-size="11.5" fill="#5a5a5a">%</text>
 <rect x="621.5" y="45" width="22.5" height="4" fill="#fff" stroke="#9ab" stroke-width="0.6"/>
 <rect x="621.8" y="45.3" width="9" height="3.4" fill="#4a95d8"/>
 <!-- machine -->
 <path d="M658.5 51 V33 Q658.5 28.8 662.5 28.8 H683.5 Q687.5 28.8 687.5 33 V51 Z" fill="#dcdcdc" stroke="#8a8a8a" stroke-width="1"/>
 <rect x="667.5" y="31.5" width="11" height="13" fill="#9cc0e8" stroke="#6a94c0" stroke-width="0.8"/>
 <rect x="670" y="35" width="6" height="5" fill="#e8eef4"/>
 <rect x="680" y="36.5" width="5" height="6.5" fill="#b8d0ea"/>
 <rect x="681.5" y="38.7" width="1.6" height="1.6" fill="#c03050"/>
 <rect x="658.3" y="46.2" width="29.6" height="5" fill="#1c4f82"/>
 <!-- pages -->
 <g fill="#fafafa" stroke="#6e6e6e" stroke-width="1">
  <path d="M701.8 46 V24.9 H712 L714 27 V46 Z"/>
  <path d="M704.6 49.5 V28.2 H715 L717 30.5 V49.5 Z"/>
  <path d="M708 53.5 V31.8 H720.5 L726.2 38 V53.5 Z"/>
 </g>
 <path d="M720.5 31.8 L726.2 38 H720.5 Z" fill="#555"/>
 <path d="M721.5 40.5 L713.5 44.5 Q711.5 46 713.5 47 L718.5 47.5 Q720.5 48.5 718.5 50 L712 52.5" fill="none" stroke="#3d8fd6" stroke-width="1.7"/>
 <!-- inspect ruler -->
 <g stroke="#444" stroke-width="1"><path d="M763 31.5 V39.5 M789.5 31.5 V39.5 M764 35.5 H788.5"/></g>
 <path d="M764 35.5 L767.5 33.5 V37.5 Z M788.5 35.5 L785 33.5 V37.5 Z" fill="#444"/>
 <rect x="763" y="41" width="26.5" height="6" fill="#f0a000"/>
 <path d="M765 41 V43 M768 41 V43 M771 41 V43 M774 41 V43 M777 41 V43 M780 41 V43 M783 41 V43 M786 41 V43" stroke="#c07800" stroke-width="0.7"/>
 <!-- select -->
 <rect x="834" y="24.3" width="26.5" height="20.7" fill="none" stroke="#3aa84a" stroke-width="1" stroke-dasharray="2 1.6"/>
 <path d="M853.5 40 V52 L856 49.5 L858.5 54.5 L860.5 53.5 L858 48.5 H861.5 Z" fill="#fff" stroke="#333" stroke-width="0.9" stroke-linejoin="round"/>
</svg>
</div>

<!-- BROWSER -->
<div class="a" style="left:4px;top:80px;width:283px;height:24px;background:#f0f0f0;border:1px solid #d8d8d8"></div>
<div class="a" style="left:28.3px;top:85.2px;font-size:10.8px;color:#5e5e5e;line-height:12px;-webkit-text-stroke:0.2px #5e5e5e;transform:scaleX(0.88);transform-origin:0 0">BROWSER</div>


<!-- browser rows -->
<div class="row" style="left:38px;top:108px;width:139px;height:19px"></div>
<div class="row" style="left:55px;top:131px;width:85px"></div>
<div class="row" style="left:55px;top:153.5px;width:104px"></div>
<div class="row" style="left:55px;top:176.5px;width:97px"></div>
<div class="row" style="left:55px;top:199px;width:141px;height:17.5px"></div>
<div class="row" style="left:55px;top:221.5px;width:97px"></div>
<div class="row" style="left:72px;top:244px;width:165.5px"></div>
<div class="a" style="left:118.8px;top:245.8px;width:95.7px;height:15px;background:#8a8a8a"></div>
<div class="row" style="left:89.5px;top:267px;width:153px"></div>
<div class="row" style="left:89.5px;top:289.5px;width:119.3px"></div>
<div class="row" style="left:106.3px;top:312px;width:96.7px"></div>
<div class="row" style="left:89.5px;top:334.5px;width:23px"></div>
<div class="a" style="left:112.5px;top:334.5px;width:133.8px;height:18px;background:#0f90d8"></div>
<div class="row" style="left:106.3px;top:357.5px;width:125px;height:17.5px"></div>

<div class="rt" style="left:93px;top:110.9px">Chess Pawn v5</div>
<div class="rt" style="left:86px;top:133.4px;font-size:10px">Units: mm</div>
<div class="rt" style="left:86px;top:156.1px">Named Views</div>
<div class="rt" style="left:110px;top:178.9px">Models</div>
<div class="rt" style="left:86px;top:201.6px;font-size:10.2px">Manufacturing Models</div>
<div class="rt" style="left:110px;top:223.9px;font-size:10px">Setups</div>
<div class="rt" style="left:127px;top:247.2px;font-weight:bold;color:#fff;-webkit-text-stroke:0.1px #fff;font-size:10.7px">Additive Setup</div>
<div class="rt" style="left:143.5px;top:269.7px;font-size:10px">Creality Ender 3 Pro</div>
<div class="rt" style="left:143.5px;top:292.2px;font-size:10px">PLA 1.75mm</div>
<div class="rt" style="left:161px;top:314.7px;font-size:10px">Normal</div>
<div class="rt" style="left:144px;top:337.2px;font-weight:bold;color:#fff;-webkit-text-stroke:0.1px #fff">Additive Toolpath</div>
<div class="rt" style="left:137px;top:359.7px;font-size:10px">Print Time [6:27:56]</div>

<svg class="a" style="left:0;top:76px" width="300" height="310" viewBox="0 76 300 310">
 <defs>
  <linearGradient id="gtri" x1="0" y1="0" x2="1" y2="1"><stop offset="0" stop-color="#666"/><stop offset="1" stop-color="#222"/></linearGradient>
 </defs>
 <!-- browser header icons -->
 <path d="M9 91.5 L13 88.8 V94.2 Z M13 91.5 L17 88.8 V94.2 Z" fill="#222"/>
 <circle cx="272" cy="91.6" r="4.6" fill="#222"/>
 <rect x="269.5" y="91" width="5" height="1.3" fill="#f0f0f0"/>
 <rect x="283" y="87" width="2" height="9" fill="#bbb"/>
 <!-- expanded triangles -->
 <g fill="#999" stroke="#333" stroke-width="1.2" stroke-linejoin="round">
  <path d="M20.6 122 L30.1 112.8 V122 Z"/>
  <path d="M37.6 235 L47.1 225.8 V235 Z"/>
  <path d="M54.6 257.8 L64.1 248.6 V257.8 Z"/>
  <path d="M71.6 303 L81.1 293.8 V303 Z"/>
  <path d="M71.6 348 L81.1 338.8 V348 Z"/>
 </g>
 <!-- collapsed arrows -->
 <g fill="#f6f6f6" stroke="#555" stroke-width="1.3" stroke-linejoin="round">
  <path d="M39 157.5 L46.2 162.8 L39 168 Z"/>
  <path d="M39 180.3 L46.2 185.5 L39 190.8 Z"/>
  <path d="M39 203 L46.2 208.2 L39 213.5 Z"/>
 </g>
 <!-- eyes -->
 <g fill="#a0a0a0">
  <path d="M41.6 117.4 Q48.6 109.6 55.6 117.4 Q48.6 125.2 41.6 117.4 Z"/>
  <path d="M58 230.5 Q65 222.7 72 230.5 Q65 238.3 58 230.5 Z"/>
  <path d="M92.5 276.3 Q99.5 268.5 106.5 276.3 Q99.5 284.1 92.5 276.3 Z"/>
 </g>
 <g fill="#f0f0f0"><circle cx="48.6" cy="117.4" r="2.5"/><circle cx="65" cy="230.5" r="2.5"/><circle cx="99.5" cy="276.3" r="2.5"/></g>
 <g fill="#a0a0a0"><circle cx="48.6" cy="117.4" r="1"/><circle cx="65" cy="230.5" r="1"/><circle cx="99.5" cy="276.3" r="1"/></g>
 <g fill="none" stroke="#c8c8c8" stroke-width="1.2">
  <path d="M58.5 185.5 Q65.5 178.5 72.5 185.5 Q65.5 192.5 58.5 185.5 Z"/>
  <circle cx="65.5" cy="185.5" r="2"/>
  <path d="M60 180 L71 191"/>
 </g>
 <!-- component icons -->
 <g fill="#f4f4f4" stroke="#5a5a5a" stroke-width="1.2" stroke-linejoin="round">
  <path d="M65 124 V112.5 L67 110.5 H72.5 V115.5"/>
  <path d="M71.5 124 V117 L73.5 115.3 H79.3 V122 L77.5 124 Z"/>
  <path d="M65 124 H71.5"/>
  <path d="M82 192 V180.5 L84 178.5 H89.5 V183.5"/>
  <path d="M88.5 192 V185 L90.5 183.3 H96.3 V190 L94.5 192 Z"/>
  <path d="M82 192 H88.5"/>
 </g>
 <!-- doc icon -->
 <path d="M59.2 144.8 V132.8 H67.5 L71.2 136.5 V144.8 Z" fill="#eef0f4" stroke="#666" stroke-width="1.1"/>
 <rect x="58.3" y="144.5" width="13.8" height="3" fill="#e0a020"/>
 <!-- folder -->
 <path d="M58 168.3 V157 H64 L65.5 158.6 H73 V168.3 Z" fill="#9c9c9c"/>
 <path d="M58 159.5 H73" stroke="#c8c8c8" stroke-width="0.8"/>
 <!-- mfg models -->
 <g fill="#f0f0f0" stroke="#777" stroke-width="1.1">
  <path d="M58.5 214.5 V203 L60.5 201 H66 V206.5"/>
  <path d="M58.5 207.5 H73 V214.5 H58.5 M65.5 207.5 V214.5"/>
 </g>
 <circle cx="70" cy="203.5" r="2.8" fill="#fff" stroke="#666" stroke-width="1.1"/>
 <!-- setups folder with dashes -->
 <g fill="none" stroke="#555" stroke-width="1.1" stroke-linejoin="round">
  <path d="M79.5 235 V224 H85.5 L86.5 226 H92 V229"/>
  <path d="M79.5 235 L82.5 229 H97 L94 235 Z"/>
  <path d="M83 226 L86 222.5 L89 225"/>
 </g>
 <path d="M80 238 H151" stroke="#5a8fc0" stroke-width="1.2" stroke-dasharray="2 3"/>
 <!-- additive setup: orange triangle & folder -->
 <path d="M76.5 259 L88.5 248 V259 Z" fill="#f5a020"/>
 <g fill="none" stroke="#555" stroke-width="1.1" stroke-linejoin="round">
  <path d="M96.5 258 V247 H102.5 L103.5 249 H109 V252"/>
  <path d="M96.5 258 L99.5 252 H114 L111 258 Z"/>
 </g>
 <path d="M97 261.5 H118" stroke="#5a8fc0" stroke-width="1.2" stroke-dasharray="2 2"/>
 <circle cx="224.5" cy="253.8" r="5.3" fill="#fff" stroke="#333" stroke-width="1.3"/>
 <circle cx="224.5" cy="253.8" r="2.2" fill="#222"/>
 <!-- machine icon -->
 <rect x="116" y="271" width="15" height="10" rx="1" fill="#d8e4f0" stroke="#5a6a80" stroke-width="1.1"/>
 <rect x="119" y="273" width="7" height="5" fill="#9ab8dc"/>
 <rect x="116" y="279.5" width="15" height="2.2" fill="#2a4a78"/>
 <!-- checks -->
 <g fill="#f4f6ee" stroke="#a8b888" stroke-width="1.4">
  <circle cx="99.5" cy="298.8" r="6.3"/><circle cx="116.3" cy="321.3" r="6.3"/><circle cx="99.5" cy="343.8" r="6.3"/>
 </g>
 <g fill="none" stroke="#88a858" stroke-width="1.3">
  <path d="M96.3 298.8 L98.8 301.3 L103 296.3"/><path d="M113.1 321.3 L115.6 323.8 L119.8 318.8"/><path d="M96.3 343.8 L98.8 346.3 L103 341.3"/>
 </g>
 <!-- material icon -->
 <path d="M119 290.5 H126.5 V294 H119 Z" fill="#a8cdf0" stroke="#4a90d8" stroke-width="0.9"/>
 <path d="M120 294 L122.8 298.5 L125.5 294" fill="#cde2f6" stroke="#4a90d8" stroke-width="0.9"/>
 <path d="M121.5 298.5 H124 V300.5 L121 304.8 H116.5 L121.5 300 Z" fill="#3a8ed8"/>
 <circle cx="127.6" cy="302.4" r="2.7" fill="#fff" stroke="#555" stroke-width="1.1"/>
 <!-- gear -->
 <g transform="translate(140 321)">
  <circle r="5" fill="none" stroke="#2a86d0" stroke-width="2.2"/>
  <g fill="#2a86d0"><rect x="-1.3" y="-8" width="2.6" height="3.5"/><rect x="-1.3" y="4.5" width="2.6" height="3.5"/><rect x="-8" y="-1.3" width="3.5" height="2.6"/><rect x="4.5" y="-1.3" width="3.5" height="2.6"/>
  <rect x="-1.3" y="-8" width="2.6" height="3.5" transform="rotate(45)"/><rect x="-1.3" y="4.5" width="2.6" height="3.5" transform="rotate(45)"/><rect x="-8" y="-1.3" width="3.5" height="2.6" transform="rotate(45)"/><rect x="4.5" y="-1.3" width="3.5" height="2.6" transform="rotate(45)"/></g>
  <path d="M-2.3 0 L-0.5 1.8 L2.5 -1.8" fill="none" stroke="#2a86d0" stroke-width="1.3"/>
 </g>
 <!-- pie -->
 <defs><linearGradient id="gpie" x1="0" y1="0" x2="1" y2="1"><stop offset="0" stop-color="#d8d8d8"/><stop offset="1" stop-color="#9a9a9a"/></linearGradient></defs>
 <circle cx="116.3" cy="366.3" r="7.0" fill="url(#gpie)"/>
 <path d="M116.3 366.3 V359.3 A7.0 7.0 0 0 1 119.80 372.36 Z" fill="#2a88e0"/>
 <circle cx="116.3" cy="366.3" r="7.0" fill="none" stroke="#555" stroke-width="1.1"/>
</svg>

<!-- SIM PANEL -->
<div class="a" style="left:791px;top:78px;width:377px;height:294px;background:#f0f0f0;border:1px solid #cfcfcf;box-shadow:1px 1px 1px rgba(0,0,0,0.08)"></div>
<div class="a" style="left:792px;top:100px;width:374px;height:1px;background:#d4d4d4"></div>
<div class="a" style="left:814.6px;top:83.6px;font-size:10.8px;color:#5e5e5e;line-height:12px;-webkit-text-stroke:0.2px #5e5e5e;transform:scaleX(0.875);transform-origin:0 0">SIMULATE ADDITIVE TOOLPATH</div>
<div class="a" style="left:796px;top:85px;width:9.5px;height:9.5px;border-radius:50%;background:#222"></div>
<div class="a" style="left:798.3px;top:89.2px;width:5px;height:1.3px;background:#f0f0f0"></div>
<!-- tab -->
<div class="a" style="left:861px;top:126px;width:305px;height:1px;background:#c8c8c8"></div>
<div class="a" style="left:792px;top:103.5px;width:69px;height:24px;border:1px solid #cdcdcd;border-bottom:none;border-left:none;background:#f0f0f0"></div>
<div class="a" style="left:819px;top:109.5px;font-size:10px;color:#444;line-height:12px">Display</div>
<svg class="a" style="left:797px;top:109px" width="20" height="14" viewBox="0 0 20 14"><path d="M1.5 6.5 Q9 -1.5 16.5 6.5 Q9 14.5 1.5 6.5 Z" fill="#8a8a8a"/><circle cx="9" cy="6.5" r="2.9" fill="#f0f0f0"/><circle cx="9" cy="6.5" r="1.5" fill="#8a8a8a"/></svg>
<div class="a" style="left:801px;top:139px;border-top:4px solid transparent;border-bottom:4px solid transparent;border-left:5px solid #222"></div>
<div class="a" style="left:815px;top:136.5px;font-size:11px;font-weight:bold;color:#333;line-height:12px">Preview Mode</div>
<div class="a" style="left:798px;top:161px;width:357px;height:1px;background:#d6d6d6"></div>
<div class="a" style="left:800px;top:178px;border-left:4px solid transparent;border-right:4px solid transparent;border-top:5px solid #222"></div>
<div class="a" style="left:815.5px;top:174.5px;font-size:10.5px;font-weight:bold;color:#333;line-height:12px">Statistics</div>
<div class="lbl" style="left:803px;top:204.3px">Layer Count</div><div class="lbl" style="left:884.5px;top:204.3px">637</div>
<div class="lbl" style="left:803px;top:232.6px">Current Height</div><div class="lbl" style="left:884.5px;top:232.6px">75.050mm</div>
<div class="lbl" style="left:803px;top:260.9px">Current Time</div><div class="lbl" style="left:884.5px;top:260.9px">1758:57:48</div>
<div class="lbl" style="left:803px;top:289.2px">Layer Time</div><div class="lbl" style="left:884.5px;top:289.2px">5:13:22</div>
<div class="lbl" style="left:803px;top:317.4px">Current Layer</div>
<div class="a" style="left:880.5px;top:310.5px;width:256px;height:23.5px;background:#fff;border:1px solid #d0d0d0"></div>
<div class="a" style="left:1124px;top:311.5px;width:12px;height:21.5px;background:#ececec;border-left:1px solid #e0e0e0"></div>
<div class="a" style="left:1128px;top:316.5px;border-left:2.5px solid transparent;border-right:2.5px solid transparent;border-bottom:3px solid #222"></div>
<div class="a" style="left:1128px;top:325.5px;border-left:2.5px solid transparent;border-right:2.5px solid transparent;border-top:3px solid #222"></div>
<div class="lbl" style="left:884.5px;top:317.4px">500</div>
<div class="a" style="left:792px;top:337px;width:374px;height:1px;background:#d8d8d8"></div>
<div class="a" style="left:799.5px;top:349.3px;width:11px;height:11px;border-radius:50%;background:#111"></div>
<div class="a" style="left:799.5px;top:349.5px;width:11px;text-align:center;font-size:9px;font-weight:bold;color:#fff;line-height:11px">i</div>
<div class="a" style="left:1013.7px;top:346px;width:76.6px;height:18px;background:#e4e4e4;border:1px solid #c4c4c4"></div>
<div class="a" style="left:1014px;top:348.5px;width:76px;text-align:center;font-size:11.5px;color:#7c7c7c;line-height:13px">Post Process</div>
<div class="a" style="left:1100.3px;top:345.6px;width:56.7px;height:17.6px;background:#e4e4e4;border:1px solid #c4c4c4"></div>
<div class="a" style="left:1100.3px;top:347.8px;width:56.7px;text-align:center;font-size:11.5px;color:#7c7c7c;line-height:13px">Cancel</div>

<!-- LEGEND -->
<div class="a" style="left:1026px;top:461px;width:20px;height:189px;background:#222"></div>
<div class="a" style="left:1027.2px;top:462.00px;width:17.6px;height:22.30px;background:#80fafa"></div>
<div class="a" style="left:1027.2px;top:485.50px;width:17.6px;height:22.30px;background:#f83a36"></div>
<div class="a" style="left:1027.2px;top:509.00px;width:17.6px;height:22.30px;background:#08f020"></div>
<div class="a" style="left:1027.2px;top:532.50px;width:17.6px;height:22.30px;background:#f8a058"></div>
<div class="a" style="left:1027.2px;top:556.00px;width:17.6px;height:22.30px;background:#fbf500"></div>
<div class="a" style="left:1027.2px;top:579.50px;width:17.6px;height:22.30px;background:#5e3898"></div>
<div class="a" style="left:1027.2px;top:603.00px;width:17.6px;height:22.30px;background:#b43c7c"></div>
<div class="a" style="left:1027.2px;top:626.50px;width:17.6px;height:22.30px;background:#9e2ea0"></div>
<div class="leg" style="top:467.8px">Support</div>
<div class="leg" style="top:491.4px">Outer Perimeter</div>
<div class="leg" style="top:515px">Inner Perimeter</div>
<div class="leg" style="top:538.6px">Infill</div>
<div class="leg" style="top:562.2px">Bridge</div>
<div class="leg" style="top:585.8px">Raft</div>
<div class="leg" style="top:609.4px">Prime</div>
<div class="leg" style="top:633px">Skirt/Brim</div>

</body></html>
